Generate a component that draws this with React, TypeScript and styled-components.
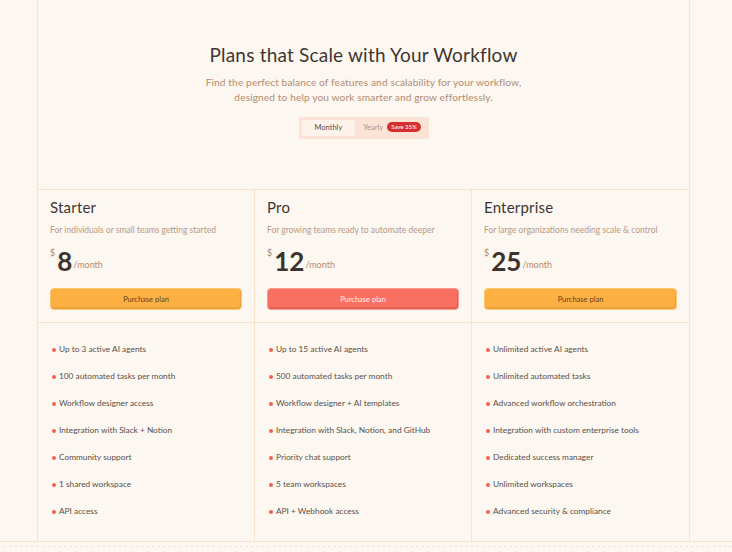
import React from 'react';
import styled, { createGlobalStyle } from 'styled-components';

const GlobalStyle = createGlobalStyle`
  html, body {
    margin: 0;
    padding: 0;
    background: #fcf7f1;
  }
  body {
    font-family: 'Lato', 'Open Sans', sans-serif;
    color: #3e3530;
  }
  * { box-sizing: border-box; }
`;

const Page = styled.div`
  width: 100%;
  min-height: 552px;
  display: flex;
  flex-direction: column;
  overflow: hidden;
`;

const Frame = styled.div`
  margin-left: 37px;
  width: 653px;
  height: 541px;
  border-left: 1px solid #f8e3cc;
  border-right: 1px solid #f8e3cc;
  display: flex;
  flex-direction: column;
`;

const Header = styled.header`
  height: 189px;
  display: flex;
  flex-direction: column;
  align-items: center;
  padding-top: 43px;
`;

const Title = styled.h1`
  margin: 0;
  font-size: 19px;
  font-weight: 400;
  color: #3f3631;
  letter-spacing: 0.2px;
`;

const Subtitle = styled.p`
  margin: 9px 0 0;
  font-size: 10.2px;
  line-height: 15px;
  text-align: center;
  color: #b38d72;
  letter-spacing: 0.1px;
`;

const Toggle = styled.div`
  margin-top: 12px;
  width: 130px;
  height: 22px;
  padding: 3px;
  background: #fbe4d5;
  border-radius: 2px;
  display: flex;
  align-items: center;
  gap: 8px;
`;

const ToggleOption = styled.div<{ $active?: boolean }>`
  height: 16px;
  padding: 1px ${(p) => (p.$active ? '13px' : '0')} 0;
  border-radius: 3px;
  background: ${(p) => (p.$active ? '#fdf3ea' : 'transparent')};
  font-size: 7.5px;
  line-height: 13px;
  color: ${(p) => (p.$active ? '#5a4c44' : '#ad8f7c')};
  display: flex;
  align-items: flex-start;
  gap: 4px;
`;

const Badge = styled.span`
  margin-top: 1px;
  background: #d62f2f;
  color: #fff;
  font-size: 6px;
  line-height: 10px;
  height: 10px;
  padding: 0 4px;
  border-radius: 5px;
`;

const Grid = styled.div`
  flex: 1;
  display: grid;
  grid-template-columns: repeat(3, 217px);
  border-top: 1px solid #f8e3cc;
`;

const Column = styled.div<{ $last?: boolean }>`
  display: flex;
  flex-direction: column;
  border-right: ${(p) => (p.$last ? 'none' : '1px solid #f8e3cc')};
`;

const Top = styled.div`
  height: 133px;
  padding: 7px 12px 0;
  border-bottom: 1px solid #f8e3cc;
`;

const PlanName = styled.h2`
  margin: 0;
  font-size: 15px;
  font-weight: 400;
  color: #3f3631;
  line-height: 20px;
  letter-spacing: 0.2px;
`;

const PlanDesc = styled.p`
  margin: 7px 0 0;
  font-size: 8.5px;
  line-height: 12px;
  color: #b89a86;
`;

const PriceRow = styled.div`
  margin-top: 10px;
  display: flex;
  align-items: flex-end;
  height: 28px;
`;

const Currency = styled.span`
  align-self: flex-start;
  font-size: 9px;
  color: #a88a76;
  margin-right: 2px;
  margin-top: 2px;
  line-height: 10px;
`;

const Amount = styled.span`
  font-size: 26px;
  font-weight: 700;
  line-height: 26px;
  color: #3c332e;
`;

const Per = styled.span`
  font-size: 9px;
  color: #b98a6c;
  margin-left: 1px;
  margin-bottom: 4px;
`;

const Button = styled.button<{ $tone: 'orange' | 'coral' }>`
  display: block;
  margin-top: 14px;
  width: 100%;
  height: 22px;
  border-radius: 4px;
  border: 1px solid ${(p) => (p.$tone === 'coral' ? '#fb9a8c' : '#fdc673')};
  background: ${(p) => (p.$tone === 'coral' ? '#f87061' : '#fdb042')};
  box-shadow: inset -1px -2px 0 ${(p) => (p.$tone === 'coral' ? '#e4604f' : '#eea23a')};
  color: ${(p) => (p.$tone === 'coral' ? '#fff4ef' : '#5e4228')};
  font-family: inherit;
  font-size: 7.5px;
  cursor: pointer;
`;

const Features = styled.ul`
  list-style: none;
  margin: 0;
  padding: 20px 12px 0 14px;
  display: flex;
  flex-direction: column;
  gap: 15px;
`;

const Feature = styled.li`
  display: flex;
  align-items: center;
  gap: 3px;
  font-size: 8.3px;
  line-height: 12px;
  color: #5b504a;
`;

const Dot = styled.span`
  width: 4px;
  height: 4px;
  border-radius: 50%;
  background: #f2604f;
  flex-shrink: 0;
  margin-top: 1px;
`;

const Footer = styled.div`
  height: 20px;
  border-top: 1px solid #f8e3cc;
  background-image: radial-gradient(circle, rgba(200, 180, 165, 0.4) 0.8px, transparent 1px);
  background-size: 5.5px 7px;
  background-position: 2px 1px;
`;

type Plan = {
  name: string;
  desc: string;
  price: string;
  tone: 'orange' | 'coral';
  features: string[];
};

const plans: Plan[] = [
  {
    name: 'Starter',
    desc: 'For individuals or small teams getting started',
    price: '8',
    tone: 'orange',
    features: [
      'Up to 3 active AI agents',
      '100 automated tasks per month',
      'Workflow designer access',
      'Integration with Slack + Notion',
      'Community support',
      '1 shared workspace',
      'API access',
    ],
  },
  {
    name: 'Pro',
    desc: 'For growing teams ready to automate deeper',
    price: '12',
    tone: 'coral',
    features: [
      'Up to 15 active AI agents',
      '500 automated tasks per month',
      'Workflow designer + AI templates',
      'Integration with Slack, Notion, and GitHub',
      'Priority chat support',
      '5 team workspaces',
      'API + Webhook access',
    ],
  },
  {
    name: 'Enterprise',
    desc: 'For large organizations needing scale & control',
    price: '25',
    tone: 'orange',
    features: [
      'Unlimited active AI agents',
      'Unlimited automated tasks',
      'Advanced workflow orchestration',
      'Integration with custom enterprise tools',
      'Dedicated success manager',
      'Unlimited workspaces',
      'Advanced security & compliance',
    ],
  },
];

export default function App() {
  return (
    <Page>
      <GlobalStyle />
      <Frame>
        <Header>
          <Title>Plans that Scale with Your Workflow</Title>
          <Subtitle>
            Find the perfect balance of features and scalability for your workflow,
            <br />
            designed to help you work smarter and grow effortlessly.
          </Subtitle>
          <Toggle>
            <ToggleOption $active>Monthly</ToggleOption>
            <ToggleOption>
              Yearly <Badge>Save 35%</Badge>
            </ToggleOption>
          </Toggle>
        </Header>
        <Grid>
          {plans.map((plan, i) => (
            <Column key={plan.name} $last={i === plans.length - 1}>
              <Top>
                <PlanName>{plan.name}</PlanName>
                <PlanDesc>{plan.desc}</PlanDesc>
                <PriceRow>
                  <Currency>$</Currency>
                  <Amount>{plan.price}</Amount>
                  <Per>/month</Per>
                </PriceRow>
                <Button $tone={plan.tone}>Purchase plan</Button>
              </Top>
              <Features>
                {plan.features.map((f) => (
                  <Feature key={f}>
                    <Dot />
                    {f}
                  </Feature>
                ))}
              </Features>
            </Column>
          ))}
        </Grid>
      </Frame>
      <Footer />
    </Page>
  );
}
